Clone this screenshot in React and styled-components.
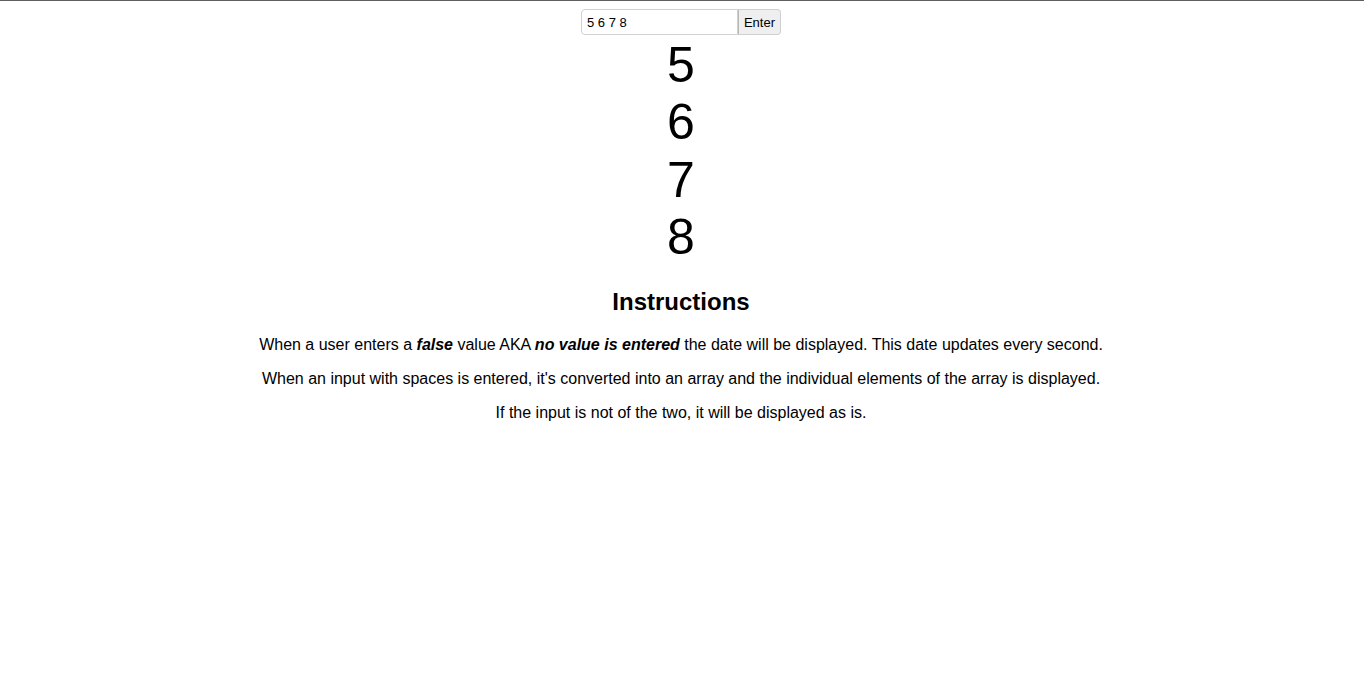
import React, { useState } from "react";
import styled, { createGlobalStyle } from "styled-components";

const Global = createGlobalStyle`
  html { border-top: 1px solid #5f5f5f; }
  body {
    margin: 8px 9px 8px 7px;
    font-family: "Liberation Sans", Arial, sans-serif;
    color: #000;
    background: #fff;
  }
`;

const Page = styled.div`
  display: flex;
  flex-direction: column;
  align-items: center;
  text-align: center;
`;

const Form = styled.form`
  display: flex;
  align-items: stretch;
  height: 26px;
`;

const Input = styled.input`
  box-sizing: border-box;
  width: 157px;
  height: 26px;
  padding: 1px 5px;
  border: 1px solid #d0d0d0;
  border-radius: 4px 0 0 4px;
  font-family: "Liberation Sans", Arial, sans-serif;
  font-size: 13px;
  color: #000;
  outline: none;
`;

const Button = styled.button`
  box-sizing: border-box;
  width: 43px;
  height: 26px;
  padding: 0 4px;
  border: 1px solid #d0d0d0;
  border-left: 1px solid #b8b8b8;
  border-radius: 0 4px 4px 0;
  background: #efefef;
  font-family: "Liberation Sans", Arial, sans-serif;
  font-size: 13px;
  color: #000;
`;

const Numbers = styled.div`
  display: flex;
  flex-direction: column;
  align-items: center;
  margin-top: 2px;
`;

const Num = styled.div`
  font-size: 50px;
  line-height: 57.4px;
`;

const Heading = styled.h2`
  font-size: 24px;
  font-weight: bold;
  margin: 21px 0 20px;
`;

const Para = styled.p`
  font-size: 16px;
  margin: 0 0 16px;
`;

export default function App() {
  const [value, setValue] = useState("5 6 7 8");
  const items = ["5", "6", "7", "8"];
  return (
    <Page>
      <Global />
      <Form onSubmit={(e) => e.preventDefault()}>
        <Input value={value} onChange={(e) => setValue(e.target.value)} />
        <Button type="submit">Enter</Button>
      </Form>
      <Numbers>
        {items.map((n) => (
          <Num key={n}>{n}</Num>
        ))}
      </Numbers>
      <Heading>Instructions</Heading>
      <Para>
        When a user enters a <b><i>false</i></b> value AKA{" "}
        <b><i>no value is entered</i></b> the date will be displayed. This date
        updates every second.
      </Para>
      <Para>
        When an input with spaces is entered, it's converted into an array and
        the individual elements of the array is displayed.
      </Para>
      <Para>If the input is not of the two, it will be displayed as is.</Para>
    </Page>
  );
}
